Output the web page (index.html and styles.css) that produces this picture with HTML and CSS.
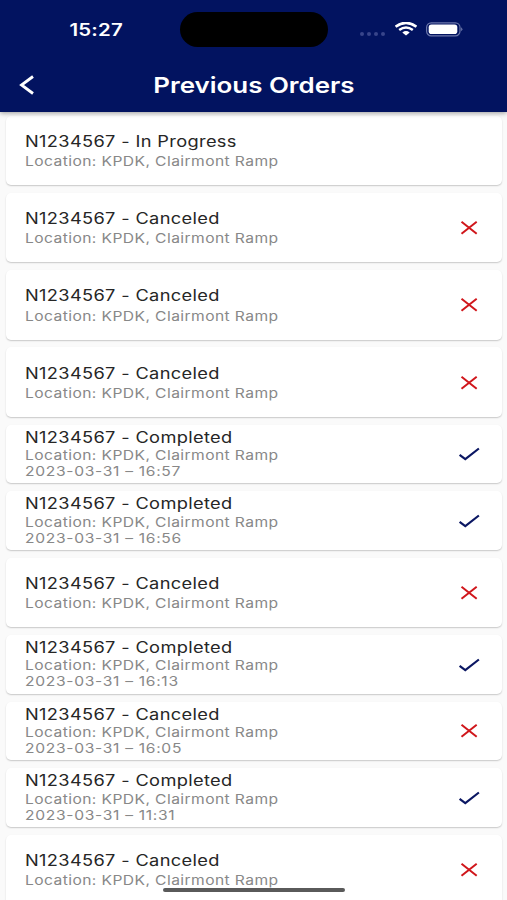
FILE: index.html
```html
<!DOCTYPE html>
<html lang="en">
<head>
<meta charset="utf-8">
<title>Previous Orders</title>
<link rel="stylesheet" href="styles.css">
</head>
<body>
<svg width="0" height="0" class="defs">
  <symbol id="cross" viewBox="0 0 24 20"><path d="M4.5 3.8 19.7 15.8M19.7 3.8 4.5 15.8" fill="none" stroke="#d0161b" stroke-width="2"/></symbol>
  <symbol id="check" viewBox="0 0 24 20"><path d="M2.6 10.8 8.3 15.1 21.9 4.5" fill="none" stroke="#0b1763" stroke-width="2.2"/></symbol>
</svg>
<header class="header">
  <div class="status">
    <div class="clock"><span class="wide">15:27</span></div>
    <div class="island"></div>
    <div class="indicators">
      <div class="dots"><i></i><i></i><i></i><i></i></div>
      <svg class="wifi" width="22" height="14" viewBox="0 0 22 14" fill="none" stroke="#fff">
        <path d="M.6 4.7Q11-3 21.4 4.7M4.2 8Q11 2.9 17.8 8" stroke-width="2.5"/>
        <path d="M7.3 10.5Q11 7.7 14.7 10.5L11 13.6Z" fill="#fff" stroke="none"/>
      </svg>
      <svg class="battery" width="37" height="15" viewBox="0 0 37 15">
        <rect x=".6" y=".8" width="33.4" height="13" rx="4.6" fill="none" stroke="#6c77aa" stroke-width="1.2"/>
        <rect x="2.7" y="2.5" width="28.6" height="9.6" rx="2.8" fill="#fff"/>
        <path d="M35.3 5.3Q37.3 7.3 35.3 9.3Z" fill="#8a93bc"/>
      </svg>
    </div>
  </div>
  <div class="bar">
    <svg class="back" width="16" height="22" viewBox="0 0 16 22"><path d="M14 2.5 2.5 11l11.5 8.5" fill="none" stroke="#fff" stroke-width="2.8"/></svg>
    <h1 class="heading"><span class="wide">Previous Orders</span></h1>
  </div>
</header>
<main class="list">
  <article class="card"><div class="text"><h2>N1234567 - In Progress</h2><p>Location: KPDK, Clairmont Ramp</p></div></article>
  <article class="card"><div class="text"><h2>N1234567 - Canceled</h2><p>Location: KPDK, Clairmont Ramp</p></div><svg class="mark"><use href="#cross"/></svg></article>
  <article class="card"><div class="text"><h2>N1234567 - Canceled</h2><p>Location: KPDK, Clairmont Ramp</p></div><svg class="mark"><use href="#cross"/></svg></article>
  <article class="card"><div class="text"><h2>N1234567 - Canceled</h2><p>Location: KPDK, Clairmont Ramp</p></div><svg class="mark"><use href="#cross"/></svg></article>
  <article class="card dated"><div class="text"><h2>N1234567 - Completed</h2><p>Location: KPDK, Clairmont Ramp</p><p class="date">2023-03-31 – 16:57</p></div><svg class="mark"><use href="#check"/></svg></article>
  <article class="card dated"><div class="text"><h2>N1234567 - Completed</h2><p>Location: KPDK, Clairmont Ramp</p><p class="date">2023-03-31 – 16:56</p></div><svg class="mark"><use href="#check"/></svg></article>
  <article class="card"><div class="text"><h2>N1234567 - Canceled</h2><p>Location: KPDK, Clairmont Ramp</p></div><svg class="mark"><use href="#cross"/></svg></article>
  <article class="card dated"><div class="text"><h2>N1234567 - Completed</h2><p>Location: KPDK, Clairmont Ramp</p><p class="date">2023-03-31 – 16:13</p></div><svg class="mark"><use href="#check"/></svg></article>
  <article class="card dated"><div class="text"><h2>N1234567 - Canceled</h2><p>Location: KPDK, Clairmont Ramp</p><p class="date">2023-03-31 – 16:05</p></div><svg class="mark"><use href="#cross"/></svg></article>
  <article class="card dated"><div class="text"><h2>N1234567 - Completed</h2><p>Location: KPDK, Clairmont Ramp</p><p class="date">2023-03-31 – 11:31</p></div><svg class="mark"><use href="#check"/></svg></article>
  <article class="card"><div class="text"><h2>N1234567 - Canceled</h2><p>Location: KPDK, Clairmont Ramp</p></div><svg class="mark"><use href="#cross"/></svg></article>
</main>
<div class="home"></div>
</body>
</html>
```
FILE: styles.css
```css
* { box-sizing: border-box; }
body {
  margin: 0;
  height: 900px;
  overflow: hidden;
  display: flex;
  flex-direction: column;
  background: #fafafa;
  font-family: Inter, "Liberation Sans", sans-serif;
}
.defs { position: absolute; }
h1, h2, p { margin: 0; white-space: nowrap; }
.header {
  flex: none;
  height: 111.5px;
  background: #021360;
  color: #fff;
  box-shadow: 0 1px 5px rgba(0, 0, 0, .4);
  z-index: 1;
}
.status {
  height: 58px;
  display: grid;
  grid-template-columns: 180px 148px 179px;
  align-items: center;
}
.wide { display: inline-block; transform: scaleX(1.2); }
.clock { padding: 2px 0 0 12px; text-align: center; font-size: 17px; font-weight: 600; letter-spacing: .15px; }
.island { height: 35px; margin-top: 1px; border-radius: 20px; background: #000; }
.indicators { display: flex; align-items: center; padding-left: 32px; }
.dots { display: flex; gap: 3px; margin: 9px 10px 0 0; }
.dots i { width: 4px; height: 4px; border-radius: 50%; background: #38458a; }
.wifi { margin-right: 9px; }
.bar {
  height: 53px;
  display: grid;
  grid-template-columns: 40px 1fr 40px;
  align-items: center;
}
.back { margin-left: 19px; }
.heading { text-align: center; font-size: 21.6px; font-weight: 600; line-height: 30px; }
.list {
  display: flex;
  flex-direction: column;
  gap: 7.8px;
  padding: 4.4px 5px 0 6px;
}
.card {
  flex: none;
  height: 69.4px;
  display: flex;
  justify-content: space-between;
  padding: 15.2px 21px 0 19px;
  border-radius: 5px;
  background: #fff;
  box-shadow: 0 1px 1.5px rgba(0, 0, 0, .2);
}
.text { transform: scaleX(1.2); transform-origin: left; }
.card h2 { font-size: 15.2px; font-weight: 400; line-height: 21.2px; letter-spacing: .29px; color: #262626; }
.card p { font-size: 13px; line-height: 18px; letter-spacing: .35px; color: #888; }
.card .date { letter-spacing: .58px; }
.card.dated { height: 58.8px; padding-top: 4.2px; }
.card.dated h2 { line-height: 18.2px; }
.card.dated p { line-height: 16px; }
.mark { width: 24px; height: 20px; margin-top: 10px; }
.dated .mark { margin-top: 15.6px; }
.home {
  position: absolute;
  left: 163px;
  top: 887.5px;
  width: 182px;
  height: 4.5px;
  border-radius: 3px;
  background: #5a5a5a;
}
```
